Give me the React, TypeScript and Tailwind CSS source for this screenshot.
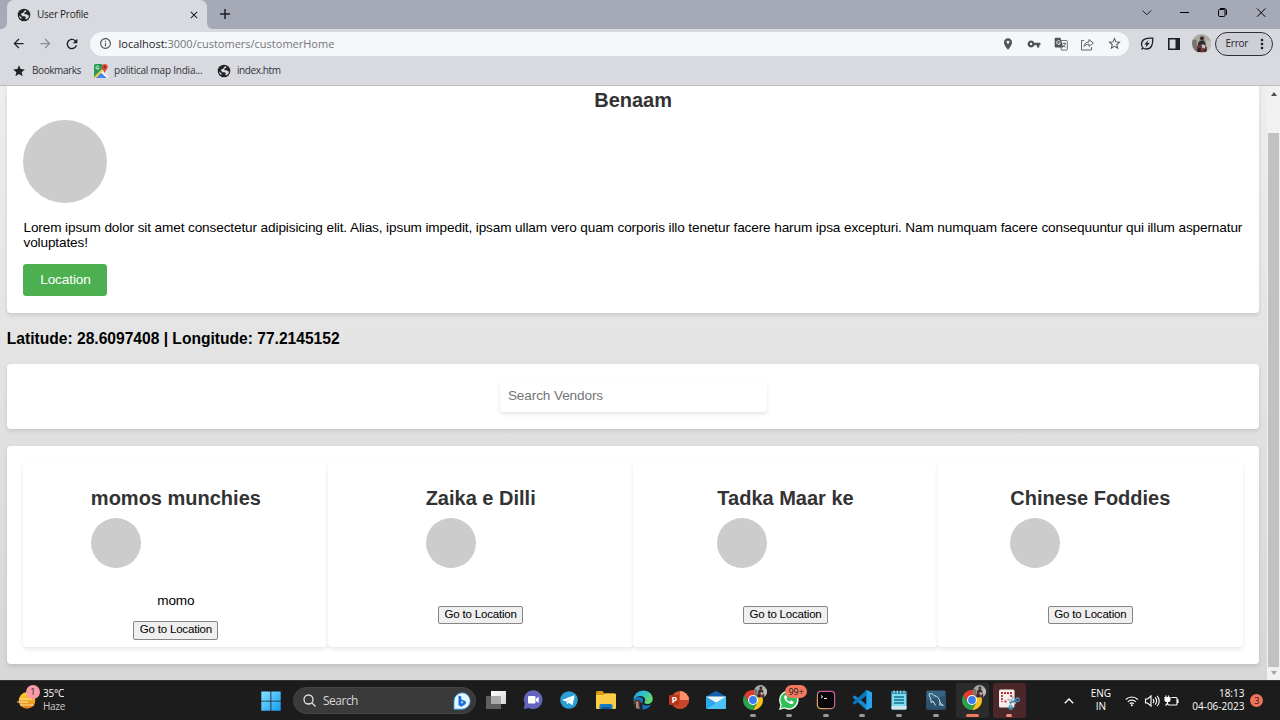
import React from "react";
import {
  MdArrowBack,
  MdArrowForward,
  MdClose,
  MdInfoOutline,
  MdMoreVert,
  MdPlace,
  MdRefresh,
  MdStar,
  MdStarBorder,
  MdVpnKey,
} from "react-icons/md";

const vendors = [
  { name: "momos munchies", about: "momo" },
  { name: "Zaika e Dilli", about: "" },
  { name: "Tadka Maar ke", about: "" },
  { name: "Chinese Foddies", about: "" },
];

function Globe() {
  return (
    <svg viewBox="0 0 14 14" className="size-[14px]">
      <circle cx="7" cy="7" r="6.300" fill="#202226" />
      <path d="M7.800 2.200l1.500.5-.2 1.300-1.700.7-.2 1.200 2.500.3 1.700 1.300.9-.2A5 5 0 0 1 9 11.500l-.8-.8.7-1.400-1.400-1-2.300-.1-1.500-2.400 2.100-.7 1.300-1.500z" fill="#d9dadf" />
      <path d="M1.900 7.600l2.500 1.700v1.300l.8 1A5 5 0 0 1 1.900 7.600z" fill="#d9dadf" />
    </svg>
  );
}

function Translate() {
  return (
    <svg viewBox="0 0 14 14" className="size-[14px]">
      <path d="M5 3.500h7.500q.8 0 .8.8v8q0 .8-.8.8H7.500z" fill="none" stroke="currentColor" strokeWidth=".8" />
      <path d="M1.500.8h5l2.700 9.700H1.500q-.8 0-.8-.8V1.600q0-.8.8-.8z" fill="currentColor" />
      <path d="M6 4.300a1.900 1.900 0 1 0 .4 1.700H4.700" fill="none" stroke="#f5f7fa" strokeWidth=".9" />
      <path d="M8.500 6.500H12M10.200 5.500v1M11.400 6.500Q11 8.800 9 10M9.300 8l2.300 2.500" fill="none" stroke="currentColor" strokeWidth=".8" />
    </svg>
  );
}

function Avatar({ className }: { className: string }) {
  return (
    <svg viewBox="0 0 20 20" className={className}>
      <clipPath id="avatarClip">
        <circle cx="10" cy="10" r="10" />
      </clipPath>
      <g clipPath="url(#avatarClip)">
        <rect width="20" height="20" fill="#aaa9a2" />
        <path d="M0 6h5v14H0z" fill="#77756f" />
        <path d="M15 7h5v13h-5z" fill="#c3beb6" />
        <circle cx="10.500" cy="4.500" r="2.200" fill="#3b2b29" />
        <path d="M8 7l4.500-.5 2 4-1 4H7l-1-4z" fill="#33292f" />
        <path d="M5 13l5-2 6 3-1 5H5z" fill="#6e3535" />
        <path d="M10 11h3l1 4h-3z" fill="#bccbd8" />
        <path d="M6 15h3v4H6zM13 16h2v3h-2z" fill="#241f26" />
      </g>
    </svg>
  );
}

function Chrome() {
  return (
    <svg viewBox="2 2 20 20" className="size-5">
      <path d="M3.340 7A10 10 0 0 1 20.660 7H12L7.670 14.500z" fill="#e33b2e" />
      <path d="M20.660 7A10 10 0 0 1 12 22L16.330 14.500 12 7z" fill="#fbc116" />
      <path d="M12 22A10 10 0 0 1 3.340 7L7.670 14.500h8.660z" fill="#2aa24c" />
      <circle cx="12" cy="12" r="5" fill="#fff" />
      <circle cx="12" cy="12" r="3.900" fill="#3b7ded" />
    </svg>
  );
}

function ChromeProfile() {
  return (
    <div className="relative size-5">
      <Chrome />
      <Avatar className="absolute -top-[5px] left-[11px] size-[13px]" />
    </div>
  );
}

function Maps() {
  return (
    <svg viewBox="0 0 14 14" className="size-[14px]">
      <rect width="14" height="14" rx="1.500" fill="#dfe3e4" />
      <path d="M0 1.500Q0 0 1.500 0H8l1 7-8.500 7Q0 13.500 0 12.500z" fill="#279a56" />
      <path d="M1.500 14L7 8l6 6z" fill="#4688f1" />
      <path d="M0 13L8 5l1.500 1.500L2 14H1z" fill="#f5cf48" />
      <path d="M7 8.500l1-1 6 5.500-1 1z" fill="#fff" />
      <path d="M10.700 0a3 3 0 0 1 3 3c0 2-2.300 3.500-3 6-.7-2.500-3-4-3-6a3 3 0 0 1 3-3z" fill="#db4437" />
      <circle cx="10.700" cy="3" r="1.100" fill="#7b231c" />
      <path d="M4.800 2.600a1.600 1.600 0 1 0 .3 1.500H3.600" fill="none" stroke="#fff" strokeWidth=".8" />
    </svg>
  );
}

function WindowsLogo() {
  return (
    <svg viewBox="0 0 20 20" className="size-5">
      <defs>
        <linearGradient id="win" gradientUnits="userSpaceOnUse" x1="0" y1="0" x2="20" y2="20">
          <stop stopColor="#8ce2ff" />
          <stop offset="1" stopColor="#109cf3" />
        </linearGradient>
      </defs>
      <path d="M.3.500h9.200v9.200H.3zM10.300.500h9.400v9.200h-9.400zM.3 10.500h9.200v9.200H.3zM10.300 10.500h9.400v9.200h-9.400z" fill="url(#win)" />
    </svg>
  );
}

function TaskView() {
  return (
    <svg viewBox="0 0 20 20" className="size-5">
      <defs>
        <linearGradient id="pane" x1="0" y1="0" x2="1" y2="1">
          <stop stopColor="#fff" />
          <stop offset="1" stopColor="#d4d4d4" />
        </linearGradient>
      </defs>
      <rect x="0" y="6" width="15" height="13" fill="#5f5f5f" />
      <rect x="5" y="1" width="15" height="13" fill="url(#pane)" />
      <rect x="5" y="6" width="10" height="8" fill="#aaa" />
    </svg>
  );
}

function Chat() {
  return (
    <svg viewBox="0 0 20 20" className="size-5">
      <path d="M10.500.5a9.300 9.300 0 1 1-4.600 17.600L.8 19l1-5A9.300 9.300 0 0 1 10.500.5z" fill="#6264bd" />
      <path d="M10.500.5a9.300 9.300 0 0 1 8 13.500A9 9 0 0 0 2 6a9 9 0 0 1 8.500-5.500z" fill="#7b7dd0" />
      <rect x="5" y="6" width="7.500" height="7.500" rx="1" fill="#fff" />
      <path d="M13 8.800L15.700 6.500v6.600L13 11z" fill="#fff" />
    </svg>
  );
}

function Telegram() {
  return (
    <svg viewBox="0 0 20 20" className="size-5">
      <circle cx="10" cy="10" r="8.800" fill="#2b9fd4" />
      <path d="M4 9.600L14.800 5.400q.9-.2.700.8l-1.800 8.200q-.3.800-1.100.3l-2.700-2-1.400 1.400q-.4.300-.5-.3l-.7-2.400-3.200-1q-.8-.4-.1-.8z" fill="#fff" />
      <path d="M7.400 11.200l5.800-3.700-4.700 4.500-.1 1.800z" fill="#bad9ea" />
    </svg>
  );
}

function Explorer() {
  return (
    <svg viewBox="0 0 20 20" className="size-5">
      <path d="M0 2.500q0-1.500 1.500-1.500h5L8.500 3.500H18v6H0z" fill="#dc9c0c" />
      <path d="M0 5h7.300L9.200 3.500H19q1 0 1 1V18q0 1-1 1H1q-1 0-1-1z" fill="#fcce45" />
      <path d="M3.500 19v-3.500q0-1.500 1.500-1.500h10q1.500 0 1.500 1.500V19z" fill="#157ac2" />
      <path d="M6 17h8v2H6z" fill="#0b5b9b" />
    </svg>
  );
}

function Edge() {
  return (
    <svg viewBox="0 0 20 20" className="size-5">
      <defs>
        <linearGradient id="edge" x1="0" y1="0" x2="1" y2=".4">
          <stop stopColor="#299ad3" />
          <stop offset=".55" stopColor="#31c2cc" />
          <stop offset="1" stopColor="#62da69" />
        </linearGradient>
      </defs>
      <path d="M.5 10Q2 7 6 7c4 0 5 3 3.500 5-1 2.500 4 5 8.500 2.600Q15.500 19.500 10 19.500A9.500 9.500 0 0 1 .5 10z" fill="#1477c3" />
      <path d="M.4 9.500A9.700 9.700 0 0 1 10 .5c6 0 9.700 4 9.700 8.500 0 3.500-2.700 5-5.200 5-3 0-3.700-1.200-2.700-2.400C14 7 7 2.500.4 9.500z" fill="url(#edge)" />
      <circle cx="4.500" cy="14" r="4.200" fill="#563832" />
      <path d="M3 12l2-1 1 8-3-1z" fill="#b78b79" />
      <path d="M0 14h3v5.500H1zM7 13h2.500v6H7z" fill="#272225" />
    </svg>
  );
}

function PowerPoint() {
  return (
    <svg viewBox="0 0 20 20" className="size-5">
      <circle cx="11" cy="10" r="9" fill="#d35230" />
      <path d="M11 1a9 9 0 0 1 9 9h-9z" fill="#ff8f6b" />
      <path d="M2 10h18a9 9 0 0 1-18 0z" fill="#c8462a" />
      <rect x="0" y="5" width="10" height="10" rx="1" fill="#b93419" />
      <text x="2.500" y="13" fontSize="9" fontWeight="700" fill="#fff" fontFamily="Open Sans, sans-serif">P</text>
    </svg>
  );
}

function Mail() {
  return (
    <svg viewBox="0 0 20 20" className="size-5">
      <path d="M0 6.500L10 .8l10 5.700v5H0z" fill="#0e62ae" />
      <path d="M0 6.500l10 6.300 10-6.300V18q0 1-1 1H1q-1 0-1-1z" fill="#27a8e9" />
      <path d="M1 19l9-6.200L20 6.500V18q0 1-1 1z" fill="#4bc3f5" />
      <path d="M0 6.500h20l-10 6.300z" fill="#f2f9fc" />
    </svg>
  );
}

function WhatsApp() {
  return (
    <div className="relative size-5">
      <svg viewBox="0 0 20 20" className="size-5">
        <path d="M0 20l1.400-5.100A9.700 9.700 0 1 1 5.200 18.600z" fill="#f5fff7" />
        <path d="M1.800 18.200l1-3.700A8.300 8.300 0 1 1 5.700 17.200z" fill="#31bd57" />
        <path d="M7 5.400c-.5-.3-1.200-.1-1.600.6-1.200 2 1.500 5.100 3.400 6.600 2 1.400 4 2.100 5.200.8.900-1 .5-1.700-.1-2L12.200 10.500q-.5-.2-.8.200l-.8 1C9 11.100 7.900 9.800 7.300 8.700l.8-1.100q.1-.3 0-.5z" fill="#fff" />
      </svg>
      <span className="absolute -top-[5px] left-[6px] flex h-[13px] w-[22px] items-center justify-center rounded-full bg-[#f27860] text-[9px] leading-none text-[#201918]">99+</span>
    </div>
  );
}

function Terminal() {
  return (
    <svg viewBox="0 0 20 20" className="size-5">
      <defs>
        <linearGradient id="term" x1="1" y1="0" x2="0" y2="1">
          <stop stopColor="#e050a1" />
          <stop offset=".45" stopColor="#bc6590" />
          <stop offset="1" stopColor="#f4b855" />
        </linearGradient>
      </defs>
      <rect x="1.400" y="1.400" width="17.200" height="17.200" rx="3.500" fill="#080808" stroke="url(#term)" strokeWidth="1.200" />
      <path d="M5 5.500l1.700 1.200L5 8M8 8.500h3" fill="none" stroke="#f5f5f5" strokeWidth="1" />
    </svg>
  );
}

function Code() {
  return (
    <svg viewBox="0 0 20 20" className="size-5">
      <path d="M14.500 0L20 2.600v14.800L14.500 20 .5 7.200l1.800-1.500q.5-.4 1 0L14.500 14.500z" fill="#1689cf" />
      <path d="M14.500 0L.5 12.800l1.800 1.500q.5.400 1 0L14.500 5.500z" fill="#087abc" />
      <path d="M14.500 0L20 2.600v14.800L14.500 20z" fill="#29a4ed" />
    </svg>
  );
}

function Notepad() {
  return (
    <svg viewBox="0 0 20 20" className="size-5">
      <rect x="2.500" y="1" width="15" height="18.500" rx="1.200" fill="#7bddf1" />
      <path d="M2.500 16h15v2.300q0 1.200-1.200 1.200H3.700q-1.200 0-1.200-1.200z" fill="#d4e5e9" />
      <rect x="2.500" y="1" width="15" height="3" rx="1" fill="#2e8aaa" />
      <path d="M5 .5v2.700M8.300.5v2.700M11.700.5v2.700M15 .5v2.700" stroke="#c9edf3" strokeWidth="1" />
      <path d="M5 7h10M5 10h10M5 13h10" stroke="#176d8f" strokeWidth="1.400" />
    </svg>
  );
}

function Workbench() {
  return (
    <svg viewBox="0 0 20 20" className="size-5">
      <rect x=".3" y=".5" width="19.400" height="19" rx="1.500" fill="#366484" />
      <path d="M.3 11L19.700 5v13q0 1.500-1.500 1.500H1.800Q.3 19.500.3 18z" fill="#2b536f" />
      <path d="M3 4c2-1.200 4 .2 5 1.600 3.500.4 5.500 3.400 6 6.400.2 1.700 1.500 2.300 3.300 3.300M3 4c.2 2 .7 3 1.600 4.200L5.300 13l1.600-2 2.700 4.500" fill="none" stroke="#d2e3ed" strokeWidth="1" />
      <path d="M14 12l-.5 3 3.800.3" fill="none" stroke="#d2e3ed" strokeWidth=".8" />
    </svg>
  );
}

function Snip() {
  return (
    <svg viewBox="0 0 20 20" className="size-5 overflow-visible">
      <rect x="0" y="-.5" width="15.500" height="18" rx="1.500" fill="#f5eeee" />
      <path d="M2 3h11" fill="none" stroke="#c5302f" strokeWidth="1.800" strokeDasharray="2 1" />
      <path d="M3 5v7M5.500 11.500h2M12.200 5v2" fill="none" stroke="#c5302f" strokeWidth="1.800" strokeDasharray="2 1" />
      <path d="M8.500 9l8.500 4.500M11 16l3-9.500" stroke="#a9b9c1" strokeWidth="1.500" />
      <path d="M10.500 13l6-2.500" stroke="#418db0" strokeWidth="1.500" />
      <circle cx="18.500" cy="9.800" r="1.800" fill="none" stroke="#3e9dce" strokeWidth="1.300" />
      <circle cx="11.800" cy="17.500" r="1.800" fill="none" stroke="#3e9dce" strokeWidth="1.300" />
    </svg>
  );
}

const apps: { icon: React.ReactNode; cell: string; bar: string }[] = [
  { icon: <TaskView />, cell: "", bar: "" },
  { icon: <Chat />, cell: "", bar: "" },
  { icon: <Telegram />, cell: "", bar: "" },
  { icon: <Explorer />, cell: "", bar: "" },
  { icon: <Edge />, cell: "", bar: "" },
  { icon: <PowerPoint />, cell: "", bar: "" },
  { icon: <Mail />, cell: "", bar: "" },
  { icon: <ChromeProfile />, cell: "", bar: "w-[6px] bg-[#999]" },
  { icon: <WhatsApp />, cell: "", bar: "w-[6px] bg-[#999]" },
  { icon: <Terminal />, cell: "", bar: "w-[6px] bg-[#999]" },
  { icon: <Code />, cell: "", bar: "w-[6px] bg-[#999]" },
  { icon: <Notepad />, cell: "", bar: "w-[6px] bg-[#999]" },
  { icon: <Workbench />, cell: "", bar: "w-[6px] bg-[#999]" },
  { icon: <ChromeProfile />, cell: "bg-[#2b2b2b]", bar: "w-[13px] bg-[#ee7b5c]" },
  { icon: <Snip />, cell: "bg-[#4b272a]", bar: "w-[6px] bg-[#f28b82]" },
];

function TabStrip() {
  return (
    <header className="flex h-[29px] shrink-0 bg-[#a6a9b6] text-[#1d1f24]">
      <div className="flex w-[7px] flex-col justify-end bg-[#d9dadf]">
        <div className="h-full rounded-br-[6px] bg-[#a6a9b6]" />
      </div>
      <div className="flex w-[200px] items-center rounded-t-[7px] bg-[#d9dadf] pl-[10px] pr-[7px]">
        <Globe />
        <span className="ml-[6px] flex-1 text-[10px] tracking-[-0.260px]">User Profile</span>
        <MdClose className="size-[12px]" />
      </div>
      <div className="w-[7px] bg-[#d9dadf]">
        <div className="h-full rounded-bl-[6px] bg-[#a6a9b6]" />
      </div>
      <svg viewBox="0 0 10 10" className="ml-[6px] mt-[9px] size-[10px]">
        <path d="M5 0v10M0 5h10" stroke="currentColor" strokeWidth="1.500" />
      </svg>
      <svg viewBox="0 0 140 29" className="ml-auto h-[29px] w-[140px]" fill="none" stroke="currentColor" strokeWidth="1">
        <path d="M2.500 10.500l4.300 4.300 4.300-4.300" />
        <path d="M40 12.500h9" stroke="#000" />
        <rect x="78.500" y="9.500" width="6.500" height="7" rx="1.200" stroke="#000" />
        <path d="M80 8.500h4q2.500 0 2.500 2.500v4" stroke="#000" />
        <path d="M117 8.500l8.300 8.300M125.300 8.500L117 16.800" stroke="#000" />
      </svg>
    </header>
  );
}

function AddressBar() {
  return (
    <div className="flex h-[29px] shrink-0 items-center bg-[#d9dadf] text-[#1f2126]">
      <MdArrowBack className="ml-[11px] size-[15px]" />
      <MdArrowForward className="ml-[12px] size-[15px] text-[#8c8e94]" />
      <MdRefresh className="ml-[11px] size-[16px]" />
      <div className="ml-[10px] flex h-6 w-[1039px] items-center rounded-full bg-[#f5f7fa] pl-[8.500px] pr-[7px] text-[#515459]">
        <MdInfoOutline className="size-[13px]" />
        <span className="ml-[7px] mt-px flex-1 text-[11px] text-[#74767b]">
          <span className="text-[#202226]">localhost:</span>3000/customers/customerHome
        </span>
        <div className="flex items-center gap-[12.600px]">
          <MdPlace className="size-[14px]" />
          <MdVpnKey className="size-[14px]" />
          <Translate />
          <svg viewBox="0 0 14 14" className="size-[14px]" fill="none" stroke="currentColor" strokeWidth=".9">
            <path d="M4 3.500H1.500v9.500h10V10M4 9.500C4.500 6.500 6 5 9 5V2.500L13.300 6 9 9.500V7.300C6.500 7.300 5 8 4 9.500z" />
          </svg>
          <MdStarBorder className="size-[15px]" />
        </div>
      </div>
      <svg viewBox="0 0 14 14" className="ml-[11px] size-[14px]" fill="none" stroke="currentColor" strokeWidth="1.300">
        <path d="M1.500 12.500L3 11M12.800 1.200C5 .8 1.500 2.800 1.500 7.200c0 2.800 2 4.800 4.800 4.800 5 0 6.700-4 6.500-10.800z" />
        <path d="M8.500 3L4.300 7.500h2.200L5.700 10.500l4-4.500H7.500z" fill="currentColor" stroke="none" />
      </svg>
      <svg viewBox="0 0 12 12" className="ml-[14px] size-[12px]">
        <path d="M.8.800h10.400v10.400H.8z" fill="none" stroke="currentColor" strokeWidth="1.600" />
        <path d="M7.500 1H11v10H7.500z" fill="currentColor" />
      </svg>
      <Avatar className="ml-[11.500px] size-[19px]" />
      <div className="ml-[4.500px] flex h-6 w-[58px] items-center rounded-full border border-[#2e3035] bg-[#cfd0d7] pl-[9.500px]">
        <span className="w-[22px] text-[10px] tracking-[-0.220px]">Error</span>
        <MdMoreVert className="ml-[6px] size-[16px] shrink-0" />
      </div>
    </div>
  );
}

function Bookmarks() {
  return (
    <nav className="flex h-[28px] shrink-0 items-center border-b border-[#bcbdc3] bg-[#d9dadf] pb-[2px] text-[10px] tracking-[-0.220px] text-[#303238]">
      <MdStar className="ml-[12px] size-[14px] text-[#202226]" />
      <span className="ml-[6px] w-[62px] tracking-[-0.420px]">Bookmarks</span>
      <Maps />
      <span className="ml-[6px] w-[103px] whitespace-nowrap">political map India...</span>
      <Globe />
      <span className="ml-[6px] tracking-[-0.400px]">index.htm</span>
    </nav>
  );
}

function Profile() {
  return (
    <section className="h-[227px] shrink-0 rounded-b-[4px] bg-white px-[16.670px] pt-[3px] shadow-[0_2px_4px_rgba(0,0,0,0.12)]">
      <h2 className="text-center text-[20px] font-bold leading-[23px] text-[#333]">Benaam</h2>
      <div className="mt-[8px] size-[83.330px] rounded-full bg-[#ccc]" />
      <p className="-mr-[8px] mt-[16.400px] text-[13.600px] leading-[15px] tracking-[-0.118px]">
        Lorem ipsum dolor sit amet consectetur adipisicing elit. Alias, ipsum impedit, ipsam ullam vero quam corporis illo tenetur facere harum ipsa excepturi. Nam numquam facere consequuntur qui illum aspernatur voluptates!
      </p>
      <button className="mt-[14px] h-8 w-[84px] rounded-[3.300px] bg-[#4caf50] text-[13.600px] tracking-[-0.120px] text-white">Location</button>
    </section>
  );
}

function VendorCard({ name, about }: { name: string; about: string }) {
  return (
    <article className="flex h-[185px] flex-1 flex-col items-center rounded-[4px] bg-white pt-[24.500px] shadow-[0_2px_4px_rgba(0,0,0,0.1)]">
      <div>
        <h2 className="text-[20px] font-bold leading-[23px] text-[#333]">{name}</h2>
        <div className="mt-[8px] size-[50px] rounded-full bg-[#ccc]" />
      </div>
      <p className="mt-[25px] text-[13.600px] leading-[15.330px] tracking-[-0.120px]">{about}</p>
      <button className="mt-[13px] h-[18.500px] w-[85px] shrink-0 rounded-[2px] border border-[#858585] bg-[#efefef] pb-px text-[11.500px] leading-none tracking-[-0.190px]">Go to Location</button>
    </article>
  );
}

function Page() {
  return (
    <main className="flex h-[594px] shrink-0 bg-linear-to-b from-[#eeeeee] to-[#d7d7d7] font-['Liberation_Sans',Arial,sans-serif] text-black">
      <div className="flex w-[1267px] flex-col overflow-hidden pl-[6.800px] pr-[7.600px]">
        <Profile />
        <h3 className="mt-[16.500px] text-[15.600px] font-bold leading-[18px]">Latitude: 28.6097408 | Longitude: 77.2145152</h3>
        <section className="mt-[16px] flex h-[65.500px] shrink-0 items-center justify-center rounded-[4px] bg-white shadow-[0_2px_4px_rgba(0,0,0,0.12)]">
          <input placeholder="Search Vendors" className="h-8 w-[267px] rounded-[4px] px-[8.330px] pb-px text-[13.600px] tracking-[-0.120px] shadow-[0_2px_4px_rgba(0,0,0,0.1)] placeholder:text-[#757575]" />
        </section>
        <section className="mt-[16.700px] flex h-[218px] shrink-0 rounded-[4px] bg-white p-[16.670px] shadow-[0_2px_4px_rgba(0,0,0,0.12)]">
          {vendors.map((v) => (
            <VendorCard key={v.name} name={v.name} about={v.about} />
          ))}
        </section>
      </div>
      <div className="flex w-[13px] flex-col items-center bg-[#f1f1f1]">
        <svg viewBox="0 0 6 4" className="mt-[6px] h-[4px] w-[6px]">
          <path d="M3 0l3 4H0z" fill="#505050" />
        </svg>
        <div className="mt-[37px] h-[534px] w-[11px] bg-[#c1c1c1]" />
        <svg viewBox="0 0 6 4" className="mt-[4px] h-[4px] w-[6px]">
          <path d="M0 0h6L3 4z" fill="#a3a3a3" />
        </svg>
      </div>
    </main>
  );
}

function Taskbar() {
  return (
    <footer className="flex h-[40px] items-center border-t border-[#333] bg-[#1c1c1c] text-white">
      <div className="flex w-[261.400px] items-center pl-[17px]">
        <div className="relative size-5">
          <svg viewBox="0 0 20 20" className="size-5">
            <defs>
              <linearGradient id="sun" x1="0" y1="0" x2="0" y2="1">
                <stop stopColor="#ffd62f" />
                <stop offset="1" stopColor="#e77b1c" />
              </linearGradient>
            </defs>
            <circle cx="10" cy="9.500" r="8.300" fill="url(#sun)" />
            <path d="M2 8h13M0 11h11M3 14h14" stroke="#ffe6a0" strokeWidth="1.200" />
          </svg>
          <span className="absolute -top-[5.500px] left-[9px] flex size-[13.500px] items-center justify-center rounded-full bg-[#fb9aa6] text-[9px] text-[#301c20]">1</span>
        </div>
        <div className="-mt-px ml-[6px] text-[10px] leading-[13px]">
          <div className="tracking-[-0.200px]">35°C</div>
          <div className="tracking-[-0.300px] text-[#c8c8c8]">Haze</div>
        </div>
      </div>
      <WindowsLogo />
      <div className="ml-[11.600px] flex h-[27px] w-[183px] items-center rounded-full border border-[#454545] bg-[#3a3a3a] pl-[9px] pr-[4px]">
        <svg viewBox="0 0 13 13" className="size-[13px]" fill="none" stroke="#e2e2e2" strokeWidth="1.300">
          <circle cx="5.500" cy="5.500" r="4.500" />
          <path d="M9 9l3.500 3.500" />
        </svg>
        <span className="ml-[7px] flex-1 text-[12px] tracking-[-0.500px] text-[#d6d6d6]">Search</span>
        <svg viewBox="0 0 18 18" className="size-[18px]">
          <path d="M9 .8A8.200 8.200 0 1 1 9 17.200H1V9A8.200 8.200 0 0 1 9 .8z" fill="#e7f5fe" stroke="#2b9edb" strokeWidth=".8" />
          <path d="M5.500 3.500l2.800 1v3l4.500 1.800v2.800l-4.500 2.700-2.800-1.600z" fill="#176ed4" />
          <path d="M8.300 9l2.300 1.200-2.300 1.500z" fill="#e7f5fe" />
        </svg>
      </div>
      <div className="ml-[1.600px] flex">
        {apps.map((a, i) => (
          <div key={i} className="flex w-[36.670px] justify-center">
            <div className={`flex h-[35px] w-[33px] flex-col items-center rounded-[3px] pt-[7px] ${a.cell}`}>
              {a.icon}
              <div className={`mt-[4px] h-[2.500px] rounded-full ${a.bar}`} />
            </div>
          </div>
        ))}
      </div>
      <div className="flex flex-1 items-center pl-[36.500px] text-[10px] leading-[13px]">
        <svg viewBox="0 0 10 6" className="h-[6px] w-[10px]" fill="none" stroke="#fff" strokeWidth="1.300">
          <path d="M.8 5.300L5 1l4.200 4.300" />
        </svg>
        <div className="-mt-px ml-[16px] w-[22px] text-center">
          <div>ENG</div>
          <div>IN</div>
        </div>
        <svg viewBox="0 0 54 14" className="ml-[13.500px] h-[14px] w-[54px]" fill="none" stroke="#fff" strokeWidth="1.100">
          <path d="M.8 5.500a8.500 8.500 0 0 1 12 0M2.800 7.800a5.700 5.700 0 0 1 8 0M4.800 9.800a3 3 0 0 1 4 0" />
          <circle cx="6.800" cy="11.300" r="1" fill="#fff" stroke="none" />
          <path d="M20.500 5h2l3.500-3v10l-3.500-3h-2zM28 5a3 3 0 0 1 0 4M30 3.300a5 5 0 0 1 0 7.400M32 1.800a7.200 7.200 0 0 1 0 10.400" />
          <path d="M46.500 3.500h4.500q1 0 1 1v5.500q0 1-1 1h-7q-1.500 0-1.500-2M53 5.500v3.500" />
          <path d="M41 3V1.500M43.500 3V1.500M40 3.500h5v2.500q0 1.500-1.500 1.500h-2q-1.500 0-1.500-1.500zM42.500 8v1.500L40.500 11.500" fill="#fff" />
        </svg>
        <div className="-mt-px ml-[8px] w-[57px] text-right whitespace-nowrap">
          <div>18:13</div>
          <div>04-06-2023</div>
        </div>
        <span className="ml-[6px] flex size-[13px] items-center justify-center rounded-full bg-[#f0735c] text-[9px] text-[#291a18]">3</span>
      </div>
    </footer>
  );
}

export default function App() {
  return (
    <div className="flex h-[720px] w-[1280px] flex-col overflow-hidden font-['Open_Sans','Noto_Sans',sans-serif]">
      <TabStrip />
      <AddressBar />
      <Bookmarks />
      <Page />
      <Taskbar />
    </div>
  );
}
